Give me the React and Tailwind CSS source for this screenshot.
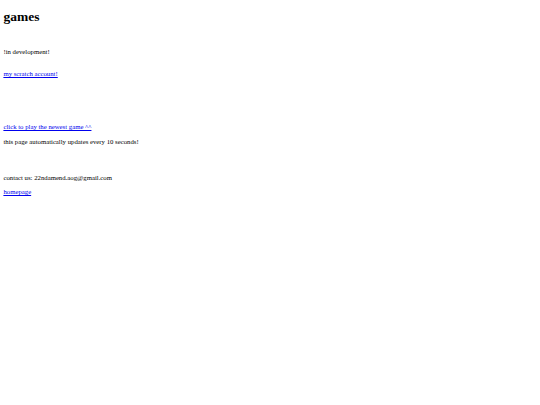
export default function App() {
  return (
    <div className="min-h-screen bg-white px-[3.4px] font-['Liberation_Serif',serif] text-black">
      <h1 className="pt-[9px] text-[13.5px] leading-[16px] font-bold">games</h1>

      <p className="mt-[23px] text-[6.75px] leading-[8px]">!in development!</p>
      <p className="mt-[14px] text-[6.75px] leading-[8px]">
        <a href="#" className="text-[#0000ee] underline">my scratch account!</a>
      </p>

      <p className="mt-[45px] text-[6.75px] leading-[8px]">
        <a href="#" className="text-[#0000ee] underline">click to play the newest game ^^</a>
      </p>
      <p className="mt-[7px] text-[6.75px] leading-[8px]">
        this page automatically updates every 10 seconds!
      </p>

      <p className="mt-[28px] text-[6.75px] leading-[8px]">contact us: 22ndamend.aog@gmail.com</p>
      <p className="mt-[6px] text-[6.75px] leading-[8px]">
        <a href="#" className="text-[#0000ee] underline">homepage</a>
      </p>
    </div>
  );
}
